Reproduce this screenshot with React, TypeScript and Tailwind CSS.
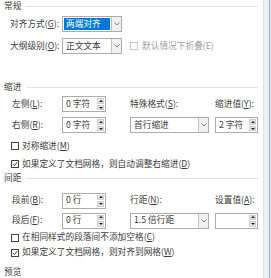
import React from "react";

const font = "font-['Noto_Sans_CJK_SC','Noto_Sans',sans-serif]";

function Key({ k }: { k: string }) {
    return (
        <>
            (<span className="underline underline-offset-1">{k}</span>)
        </>
    );
}

function Header({ title, className = "" }: { title: string; className?: string }) {
    return (
        <div className={`flex items-center h-[13px] pl-[4px] pr-[5px] ${className}`}>
            <span className="text-[#3c3c3c]">{title}</span>
            <div className="flex-1 h-px bg-[#e3e3e3] ml-[5px]" />
        </div>
    );
}

function Chevron() {
    return (
        <svg width="6" height="4" viewBox="0 0 6 4" className="text-[#707070]">
            <path d="M0.5 0.5 L3 3 L5.5 0.5" fill="none" stroke="currentColor" strokeWidth="0.9" />
        </svg>
    );
}

function Select({ value, w, active = false }: { value: string; w: string; active?: boolean }) {
    return (
        <div className={`flex h-[16px] border border-[#adadad] bg-white ${w}`}>
            <div className="flex-1 flex items-center p-[1px]">
                <span
                    className={`h-full flex items-center px-[2px] ${
                        active ? "bg-[#0078d7] text-white w-full" : "text-[#3c3c3c]"
                    }`}
                >
                    {value}
                </span>
            </div>
            <div className="w-[10px] border-l border-[#c4c4c4] bg-[#f0f0f0] flex items-center justify-center">
                <Chevron />
            </div>
        </div>
    );
}

function Spin({ value, w }: { value: string; w: string }) {
    return (
        <div className={`flex h-[16px] border border-[#adadad] bg-white ${w}`}>
            <div className="flex-1 flex items-center pl-[3px] text-[#3c3c3c]">{value}</div>
            <div className="w-[8px] flex flex-col gap-px p-px pl-0">
                <div className="flex-1 bg-[#e5e5e5] border border-[#cfcfcf] flex items-center justify-center">
                    <svg width="4" height="2" viewBox="0 0 4 2">
                        <path d="M0 2 L2 0 L4 2 Z" fill="#222" />
                    </svg>
                </div>
                <div className="flex-1 bg-[#e5e5e5] border border-[#cfcfcf] flex items-center justify-center">
                    <svg width="4" height="2" viewBox="0 0 4 2">
                        <path d="M0 0 L2 2 L4 0 Z" fill="#222" />
                    </svg>
                </div>
            </div>
        </div>
    );
}

function Check({ checked = false, disabled = false }: { checked?: boolean; disabled?: boolean }) {
    return (
        <div
            className={`w-[8px] h-[8px] border bg-white flex items-center justify-center ${
                disabled ? "border-[#c8c8c8]" : "border-[#444]"
            }`}
        >
            {checked && (
                <svg width="6" height="6" viewBox="0 0 6 6">
                    <path d="M0.8 3 L2.4 4.6 L5.2 1.2" fill="none" stroke="#222" strokeWidth="0.9" />
                </svg>
            )}
        </div>
    );
}

function CheckRow({ label, checked = false, className = "" }: { label: React.ReactNode; checked?: boolean; className?: string }) {
    return (
        <div className={`flex items-center h-[13px] pl-[11px] ${className}`}>
            <Check checked={checked} />
            <span className="ml-[3px] text-[#3c3c3c] whitespace-nowrap">{label}</span>
        </div>
    );
}

function Label({ children, w = "w-[62px]", pl = "pl-[12px]" }: { children: React.ReactNode; w?: string; pl?: string }) {
    return <span className={`${w} ${pl} text-[#3c3c3c] whitespace-nowrap`}>{children}</span>;
}

export default function App() {
    return (
        <div className={`w-[271px] h-[278px] overflow-hidden bg-white flex ${font} text-[8.7px] leading-none`}>
            <div className="w-[263px] flex flex-col">
                {/* 常规 */}
                <Header title="常规" />
                <div className="flex items-center h-[16px] mt-[4px]">
                    <Label pl="pl-[10px]">
                        对齐方式<Key k="G" />:
                    </Label>
                    <Select value="两端对齐" w="w-[60px]" active />
                </div>
                <div className="flex items-center h-[16px] mt-[6px]">
                    <Label pl="pl-[10px]">
                        大纲级别<Key k="O" />:
                    </Label>
                    <Select value="正文文本" w="w-[60px]" />
                    <div className="ml-[8px]">
                        <Check disabled />
                    </div>
                    <span className="ml-[4px] text-[#a0a0a0] whitespace-nowrap">默认情况下折叠(E)</span>
                </div>

                {/* 缩进 */}
                <Header title="缩进" className="mt-[27px]" />
                <div className="flex items-center h-[16px] mt-[3px]">
                    <Label>
                        左侧<Key k="L" />:
                    </Label>
                    <Spin value="0 字符" w="w-[44px]" />
                    <Label w="w-[85px] ml-[24px]" pl="">
                        特殊格式<Key k="S" />:
                    </Label>
                    <Label w="" pl="">
                        缩进值<Key k="Y" />:
                    </Label>
                </div>
                <div className="flex items-center h-[16px] mt-[5px]">
                    <Label>
                        右侧<Key k="R" />:
                    </Label>
                    <Spin value="0 字符" w="w-[44px]" />
                    <div className="ml-[24px]">
                        <Select value="首行缩进" w="w-[79px]" />
                    </div>
                    <div className="ml-[6px]">
                        <Spin value="2 字符" w="w-[43px]" />
                    </div>
                </div>
                <CheckRow className="mt-[7px]" label={<>对称缩进<Key k="M" /></>} />
                <CheckRow
                    className="mt-[6px]"
                    checked
                    label={<>如果定义了文档网格，则自动调整右缩进<Key k="D" /></>}
                />

                {/* 间距 */}
                <Header title="间距" className="mt-[2px]" />
                <div className="flex items-center h-[16px] mt-[8px]">
                    <Label>
                        段前<Key k="B" />:
                    </Label>
                    <Spin value="0 行" w="w-[44px]" />
                    <Label w="w-[85px] ml-[24px]" pl="">
                        行距<Key k="N" />:
                    </Label>
                    <Label w="" pl="">
                        设置值<Key k="A" />:
                    </Label>
                </div>
                <div className="flex items-center h-[16px] mt-[4px]">
                    <Label>
                        段后<Key k="F" />:
                    </Label>
                    <Spin value="0 行" w="w-[44px]" />
                    <div className="ml-[24px]">
                        <Select value="1.5 倍行距" w="w-[79px]" />
                    </div>
                    <div className="ml-[6px]">
                        <Spin value="" w="w-[43px]" />
                    </div>
                </div>
                <CheckRow className="mt-[3px]" label={<>在相同样式的段落间不添加空格<Key k="C" /></>} />
                <CheckRow
                    className="mt-[3px]"
                    checked
                    label={<>如果定义了文档网格，则对齐到网格<Key k="W" /></>}
                />
                <div className="flex items-center h-[13px] pl-[4px] mt-[7px] text-[#3c3c3c]">预览</div>
            </div>
            <div className="flex-1 flex">
                <div className="w-[6px] bg-[#f0f0f0] border-l border-[#e2e2e2]" />
                <div className="w-px bg-[#8db5de]" />
                <div className="flex-1 bg-[#ececec]" />
            </div>
        </div>
    );
}
